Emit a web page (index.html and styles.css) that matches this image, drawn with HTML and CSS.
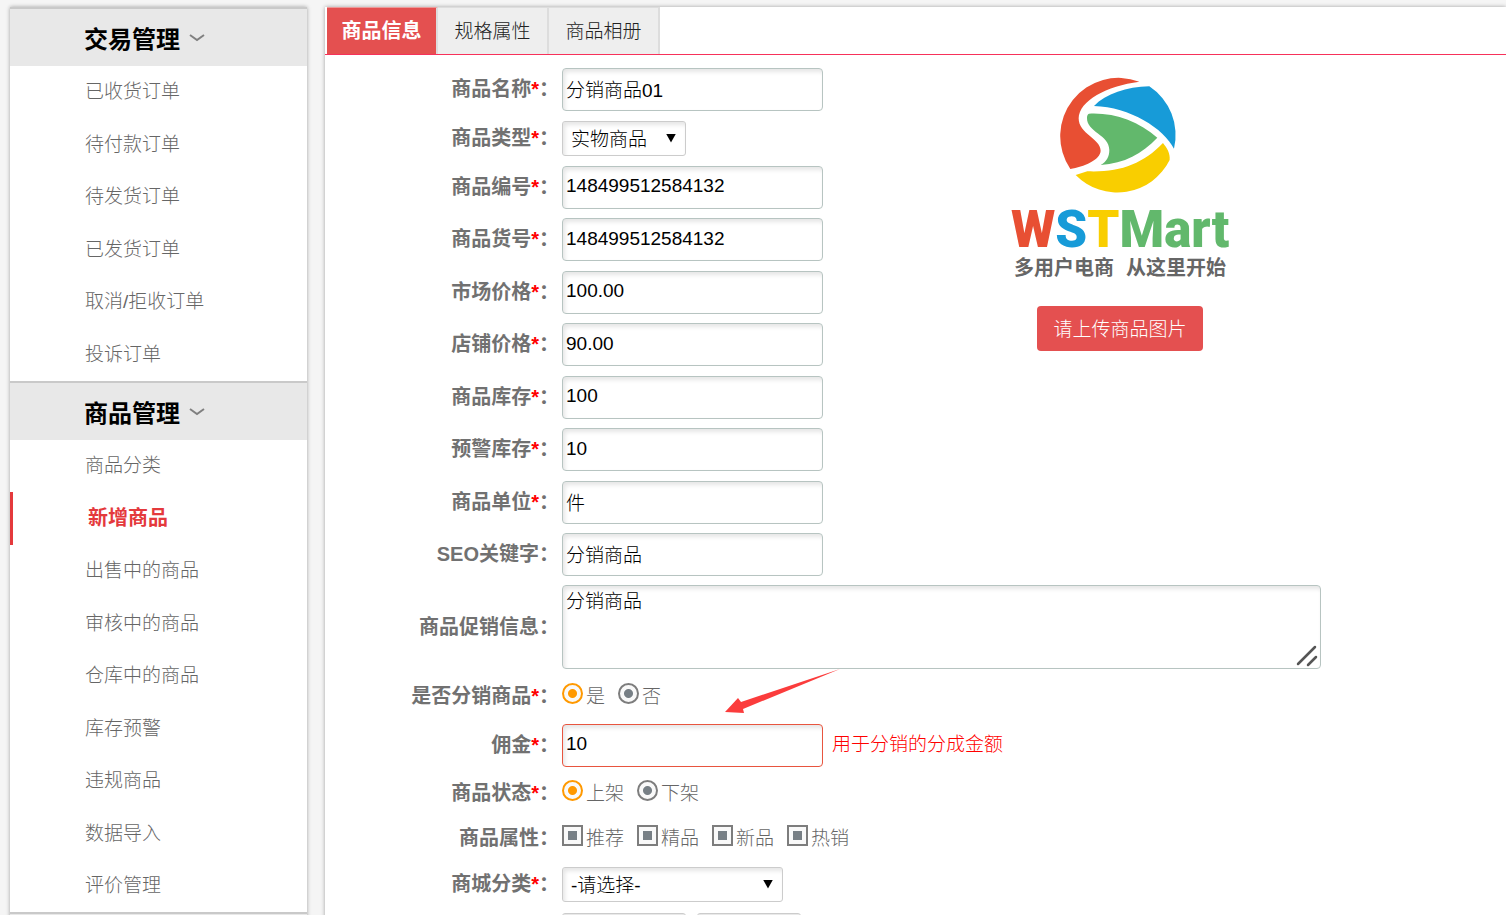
FILE: index.html
```html
<!DOCTYPE html>
<html lang="zh-CN">
<head>
    <meta charset="UTF-8">
    <meta name="viewport" content="width=device-width, initial-scale=1.0">
    <title>新增商品</title>
    <link rel="stylesheet" href="styles.css">
</head>
<body>

    <nav class="sidebar">
        <h2 class="menu-title">交易管理
            <svg class="arrow" viewBox="0 0 16 8"><path d="M1 1 L8 6 L15 1"></path></svg>
        </h2>
        <ul class="menu">
            <li><a href="#">已收货订单</a></li>
            <li><a href="#">待付款订单</a></li>
            <li><a href="#">待发货订单</a></li>
            <li><a href="#">已发货订单</a></li>
            <li><a href="#">取消/拒收订单</a></li>
            <li><a href="#">投诉订单</a></li>
        </ul>
        <h2 class="menu-title">商品管理
            <svg class="arrow" viewBox="0 0 16 8"><path d="M1 1 L8 6 L15 1"></path></svg>
        </h2>
        <ul class="menu">
            <li><a href="#">商品分类</a></li>
            <li class="active"><a href="#">新增商品</a></li>
            <li><a href="#">出售中的商品</a></li>
            <li><a href="#">审核中的商品</a></li>
            <li><a href="#">仓库中的商品</a></li>
            <li><a href="#">库存预警</a></li>
            <li><a href="#">违规商品</a></li>
            <li><a href="#">数据导入</a></li>
            <li><a href="#">评价管理</a></li>
        </ul>
        <div class="menu-title"></div>
    </nav>

    <main class="content">
        <div class="tabs">
            <button type="button" class="tab on">商品信息</button>
            <button type="button" class="tab">规格属性</button>
            <button type="button" class="tab">商品相册</button>
        </div>

        <form class="form">
            <div class="top">
                <div class="fields">
                    <div class="row">
                        <label class="name" for="goodsName">商品名称<i>*</i>：</label>
                        <input class="text" id="goodsName" type="text" value="分销商品01">
                    </div>
                    <div class="row short">
                        <label class="name" for="goodsType">商品类型<i>*</i>：</label>
                        <span class="select"><select id="goodsType"><option>实物商品</option></select></span>
                    </div>
                    <div class="row">
                        <label class="name" for="goodsSn">商品编号<i>*</i>：</label>
                        <input class="text" id="goodsSn" type="text" value="148499512584132">
                    </div>
                    <div class="row">
                        <label class="name" for="productNo">商品货号<i>*</i>：</label>
                        <input class="text" id="productNo" type="text" value="148499512584132">
                    </div>
                    <div class="row">
                        <label class="name" for="marketPrice">市场价格<i>*</i>：</label>
                        <input class="text" id="marketPrice" type="text" value="100.00">
                    </div>
                    <div class="row">
                        <label class="name" for="shopPrice">店铺价格<i>*</i>：</label>
                        <input class="text" id="shopPrice" type="text" value="90.00">
                    </div>
                    <div class="row">
                        <label class="name" for="goodsStock">商品库存<i>*</i>：</label>
                        <input class="text" id="goodsStock" type="text" value="100">
                    </div>
                    <div class="row">
                        <label class="name" for="warnStock">预警库存<i>*</i>：</label>
                        <input class="text" id="warnStock" type="text" value="10">
                    </div>
                    <div class="row">
                        <label class="name" for="goodsUnit">商品单位<i>*</i>：</label>
                        <input class="text" id="goodsUnit" type="text" value="件">
                    </div>
                    <div class="row">
                        <label class="name" for="seo">SEO关键字：</label>
                        <input class="text" id="seo" type="text" value="分销商品">
                    </div>
                </div>

                <div class="upload">
                    <svg class="logo" viewBox="0 0 220 206">
                        <g transform="translate(-20 -15) scale(.3333)">
                            <path fill="#e84f33" d="M448 65 A175 175 0 0 0 241 327 C281 320 331 300 332 272 C332 236 266 222 266 175 C267 122 350 78 448 65Z"></path>
                            <path fill="#179bd8" d="M478 79 A175 175 0 0 1 552 266 C522 206 420 141 312 138 C348 101 410 81 478 79Z"></path>
                            <path fill="#62b86c" d="M297 161 C372 157 446 184 502 233 C456 281 404 310 332 315 C350 305 358 290 358 270 C358 224 290 216 291 174 C291 167 293 162 297 161Z"></path>
                            <path fill="#f9ce00" d="M519 249 C531 264 541 280 539 300 A175 175 0 0 1 257 345 L292 334 C388 338 459 312 519 249Z"></path>
                        </g>
                        <text class="brand" x="1" y="172"><tspan fill="#e84f33">W</tspan><tspan fill="#179bd8">S</tspan><tspan fill="#f9ce00">T</tspan><tspan fill="#62b86c">Mart</tspan></text>
                        <text class="slogan" x="4" y="200">多用户电商</text>
                        <text class="slogan" x="116" y="200">从这里开始</text>
                    </svg>
                    <button type="button" class="btn">请上传商品图片</button>
                </div>
            </div>

            <div class="row tall">
                <label class="name" for="goodsTips">商品促销信息：</label>
                <div class="area">
                    <textarea id="goodsTips">分销商品</textarea>
                    <svg class="grip" viewBox="0 0 22 22"><path d="M2 19 L19 2 M12 20 L20 12"></path></svg>
                </div>
            </div>
            <div class="row short">
                <span class="name">是否分销商品<i>*</i>：</span>
                <div class="options">
                    <label><input type="radio" name="isDistribut" checked>是</label>
                    <label><input type="radio" name="isDistribut">否</label>
                </div>
                <svg class="pointer" viewBox="0 0 116 46"><path d="M0 43 L13 29 L16 33 L115 0 L18 40 L19 44Z"></path></svg>
            </div>
            <div class="row">
                <label class="name" for="commission">佣金<i>*</i>：</label>
                <input class="text error" id="commission" type="text" value="10">
                <span class="tip">用于分销的分成金额</span>
            </div>
            <div class="row check">
                <span class="name">商品状态<i>*</i>：</span>
                <div class="options">
                    <label><input type="radio" name="isSale" checked>上架</label>
                    <label><input type="radio" name="isSale">下架</label>
                </div>
            </div>
            <div class="row check">
                <span class="name">商品属性：</span>
                <div class="options">
                    <label><input type="checkbox" name="isRecom">推荐</label>
                    <label><input type="checkbox" name="isBest">精品</label>
                    <label><input type="checkbox" name="isNew">新品</label>
                    <label><input type="checkbox" name="isHot">热销</label>
                </div>
            </div>
            <div class="row short">
                <label class="name" for="goodsCat">商城分类<i>*</i>：</label>
                <span class="select wide"><select id="goodsCat"><option>-请选择-</option></select></span>
            </div>
            <div class="row short">
                <span class="name"></span>
                <span class="select"><select aria-label="一级分类"><option></option></select></span>
                <span class="select small"><select aria-label="二级分类"><option></option></select></span>
            </div>
        </form>
    </main>

</body>
</html>
```
FILE: styles.css
```css
* {
    margin: 0;
    padding: 0;
    box-sizing: border-box;
}

body {
    display: flex;
    align-items: flex-start;
    gap: 18px;
    height: 100vh;
    padding: 7px 0 0 10px;
    overflow: hidden;
    background-color: #f5f5f5;
    color: #666;
    font-family: "Liberation Sans", "Noto Sans CJK SC", sans-serif;
    font-size: 19px;
    font-weight: 300;
}

input,
select,
textarea,
button {
    font: inherit;
}

/* 左侧菜单 */
.sidebar {
    flex: none;
    width: 297px;
    background-color: #fff;
    box-shadow: 0 0 4px rgba(0, 0, 0, 0.35);
}

.menu-title {
    display: flex;
    align-items: center;
    gap: 9px;
    height: 59px;
    padding-left: 74px;
    border-top: 2px solid #c9c9c9;
    background-color: #e8e8e8;
    color: #000;
    font-size: 24px;
    font-weight: bold;
}

.arrow {
    width: 16px;
    height: 8px;
    fill: none;
    stroke: #808080;
    stroke-width: 2;
}

.menu {
    list-style: none;
}

.menu li {
    padding-left: 75px;
    line-height: 52px;
}

.menu li:nth-child(even) {
    line-height: 53px;
}

.menu a {
    display: block;
    color: #666;
    text-decoration: none;
}

.menu .active {
    border-left: 3px solid #e4393c;
}

.menu .active a {
    color: #e4393c;
    font-size: 20px;
    font-weight: bold;
}

/* 右侧内容 */
.content {
    flex: 1;
    background-color: #fff;
    box-shadow: 0 0 4px rgba(0, 0, 0, 0.35);
}

.tabs {
    display: flex;
    padding-left: 2px;
    border-bottom: 1px solid #f7315a;
}

.tab {
    width: 111px;
    height: 47px;
    padding-bottom: 3px;
    border: 1px solid #ddd;
    border-width: 1px 2px 0 0;
    background-color: #eee;
    color: #222;
}

.tab.on {
    border-top-color: #e99;
    background-color: #e45050;
    color: #fff;
    font-size: 20px;
    font-weight: bold;
}

.form {
    padding-top: 8px;
}

.top {
    display: flex;
}

.row {
    position: relative;
    display: flex;
    align-items: center;
    gap: 3px;
    height: 52px;
}

.fields .row:nth-child(even) {
    height: 53px;
}

.row.short,
.fields .row.short {
    height: 46px;
}

.row.check {
    height: 45px;
}

.row.tall {
    height: 92px;
}

.name {
    flex: none;
    width: 234px;
    padding-bottom: 4px;
    color: #717171;
    font-size: 20px;
    font-weight: bold;
    text-align: right;
}

.name i {
    color: #f00;
    font-style: normal;
}

.text,
textarea {
    border: 1px solid #b7c4c1;
    border-radius: 4px;
    background-color: #fff;
    box-shadow: inset 2px 3px 4px rgba(0, 0, 0, 0.1);
    color: #000;
}

.text {
    width: 261px;
    height: 43px;
    padding: 0 3px 2px;
}

.text.error {
    border-color: #e8553f;
}

.area {
    position: relative;
    width: 759px;
    height: 84px;
}

textarea {
    display: block;
    width: 100%;
    height: 100%;
    padding: 0 3px;
    resize: none;
}

.grip {
    position: absolute;
    right: 3px;
    bottom: 2px;
    width: 22px;
    height: 22px;
    stroke: #555;
    stroke-width: 2.5;
    stroke-linecap: round;
}

.select {
    position: relative;
    width: 124px;
    height: 35px;
}

.select.wide {
    width: 221px;
}

.select.small {
    width: 104px;
    margin-left: 8px;
}

.select select {
    width: 100%;
    height: 100%;
    padding: 2px 8px 0;
    border: 1px solid #ccc;
    border-radius: 3px;
    background-color: #fff;
    box-shadow: inset 2px 3px 4px rgba(0, 0, 0, 0.1);
    color: #000;
    appearance: none;
}

.select::after {
    content: "";
    position: absolute;
    top: 13px;
    right: 10px;
    width: 10px;
    height: 9px;
    background-color: #000;
    clip-path: polygon(0 0, 100% 0, 50% 100%);
    pointer-events: none;
}

.options {
    display: flex;
    gap: 13px;
    padding-bottom: 4px;
}

.options label {
    display: flex;
    align-items: center;
    gap: 3px;
}

.options input {
    width: 21px;
    height: 21px;
    margin-bottom: 2px;
    border: 2px solid #7d7d7d;
    background: #f9f9f9 linear-gradient(#777f85, #777f85) center / 9px 9px no-repeat;
    appearance: none;
}

.options input[type="radio"] {
    border-radius: 50%;
    background: #f9f9f9 radial-gradient(circle, #777f85 4px, transparent 5px);
}

.options input[type="radio"]:checked {
    border-color: #f90;
    background-image: radial-gradient(circle, #f90 4px, transparent 5px);
}

.tip {
    padding-bottom: 6px;
    margin-left: 6px;
    color: #f00;
}

/* 指向佣金的箭头 */
.pointer {
    position: absolute;
    top: -4px;
    left: 400px;
    width: 116px;
    height: 46px;
    fill: #fb3c3c;
    pointer-events: none;
}

/* 商品图片 */
.upload {
    flex: 1;
    display: flex;
    flex-direction: column;
    align-items: center;
    gap: 25px;
    max-width: 594px;
    padding-top: 12px;
}

.logo {
    width: 220px;
    height: 206px;
}

.brand {
    font-family: Roboto, sans-serif;
    font-size: 51px;
    font-weight: 900;
}

.slogan {
    fill: #666;
    font-size: 20px;
    font-weight: bold;
}

.btn {
    width: 166px;
    height: 45px;
    padding-bottom: 3px;
    border: 0;
    border-radius: 4px;
    background-color: #e45050;
    color: #fff;
}
```
